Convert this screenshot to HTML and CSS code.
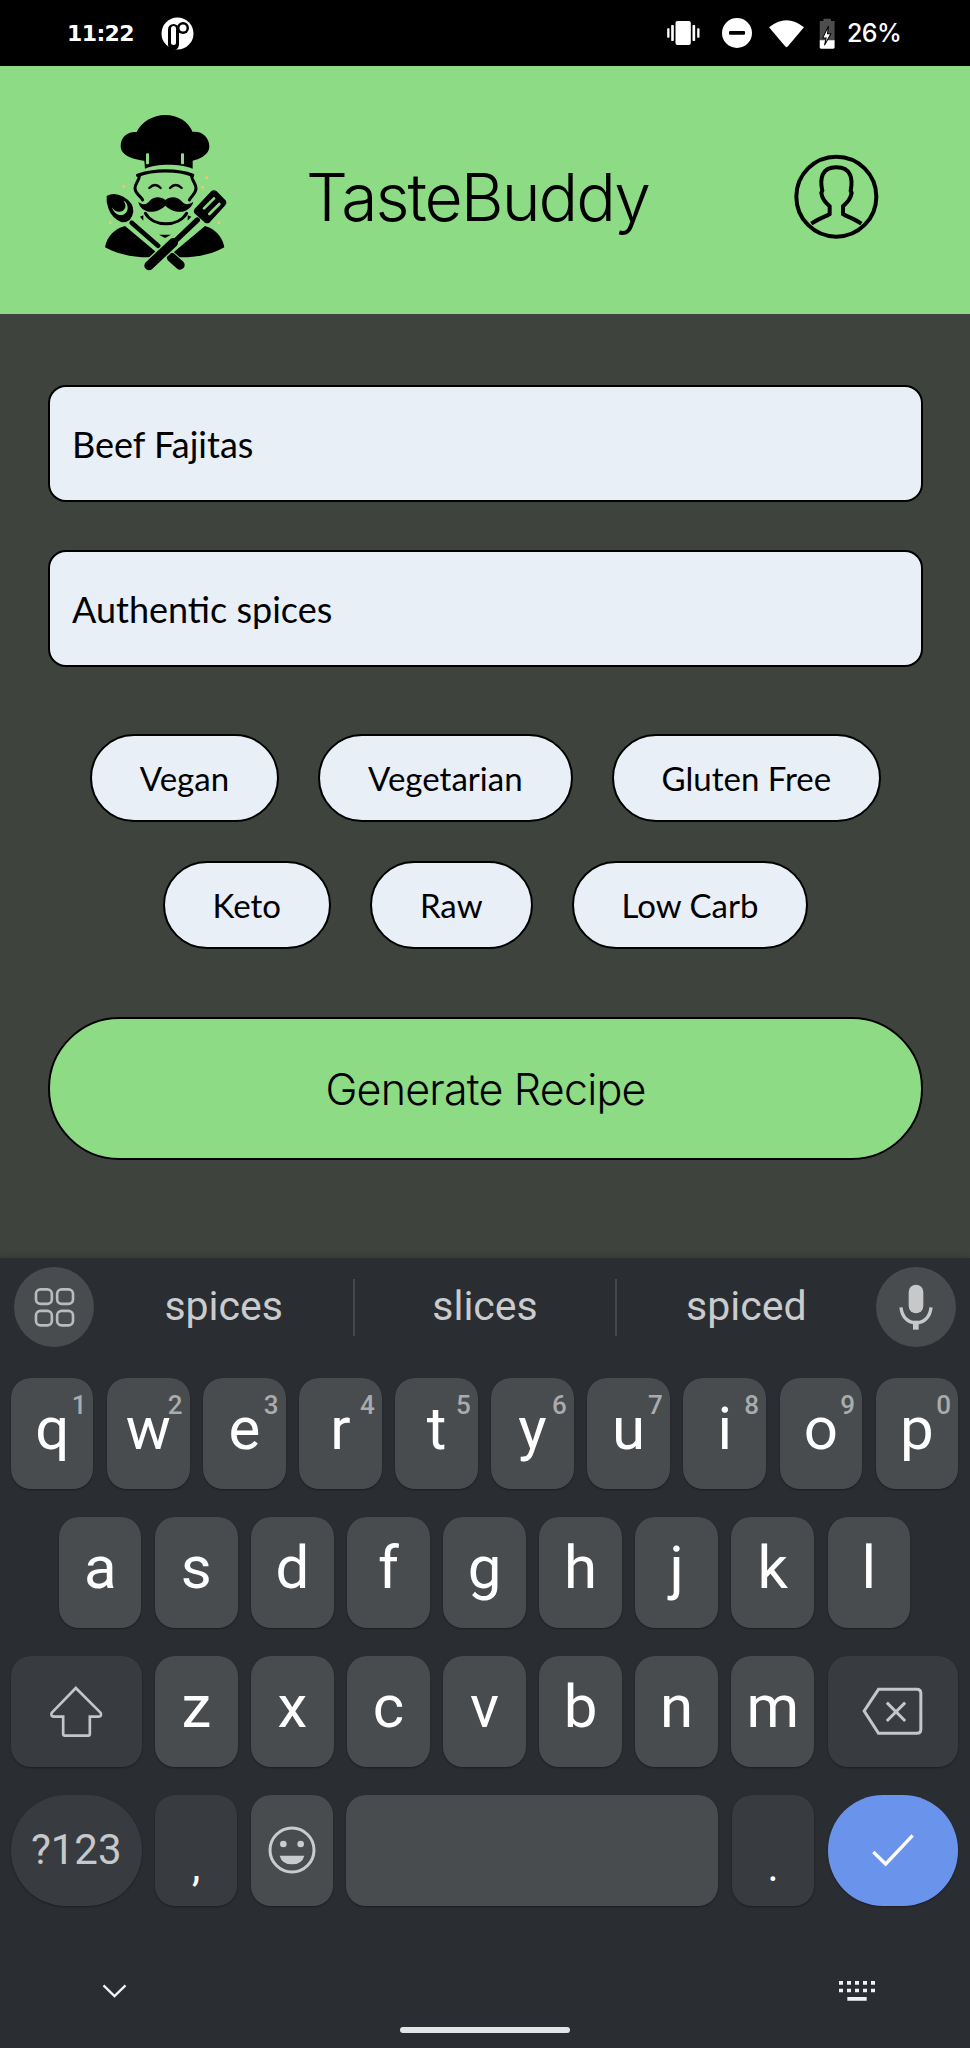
FILE: index.html
```html
<!DOCTYPE html>
<html lang="en">
<head>
<meta charset="utf-8">
<title>TasteBuddy</title>
<link rel="stylesheet" href="styles.css">
</head>
<body>
<div class="screen">
  <div class="status">
    <span class="time">11:22</span>
    <svg class="st-app" viewBox="0 0 33 33"><circle cx="16.5" cy="16.5" r="16" fill="#fff"/><rect x="7" y="7" width="11" height="26" rx="5.5" fill="#000"/><rect x="10" y="9" width="5" height="19" rx="2.5" fill="#fff"/><circle cx="22" cy="11" r="6" fill="#000"/><circle cx="22" cy="11" r="3.5" fill="#fff"/></svg>
    <span class="st-spacer"></span>
    <svg class="st-vib" viewBox="545 66 98 72"><rect x="570" y="66" width="46" height="72" rx="6" fill="#fff"/><rect x="557" y="78" width="8" height="48" rx="2" fill="#fff"/><rect x="545" y="88" width="7" height="28" rx="2" fill="#fff"/><rect x="621" y="78" width="8" height="48" rx="2" fill="#fff"/><rect x="635" y="88" width="7" height="28" rx="2" fill="#fff"/></svg>
    <svg class="st-dnd" viewBox="710 58 90 90"><circle cx="755" cy="103" r="45" fill="#fff"/><rect x="731" y="97" width="48" height="11" rx="3" fill="#000"/></svg>
    <svg class="st-wifi" viewBox="850 60 106 88"><path d="M850 85Q903 42 956 85L908 142Q903 149 898 142Z" fill="#fff"/></svg>
    <svg class="st-bat" viewBox="1002 56 50 92"><path d="M1015 58H1037V65H1048V125H1004V65H1015Z" fill="#4d4d4d"/><path d="M1004 122H1048V143Q1048 147 1044 147H1008Q1004 147 1004 143Z" fill="#fff"/><path d="M1030 80L1013 115H1023L1018 137L1037 103H1027Z" fill="#fff" stroke="#000" stroke-width="3"/></svg>
    <span class="batt">26%</span>
  </div>

  <header class="head">
    <svg class="chef" viewBox="0 6 480 570">
      <path d="M165 206L163 182C125 178 92 165 92 138C92 110 115 93 140 96C155 65 190 45 225 45C265 45 295 65 308 96C335 92 358 112 358 140C358 165 325 178 308 182L308 206C270 190 200 190 165 206Z" fill="#000"/>
      <rect x="168" y="160" width="9" height="33" rx="3" fill="#8edb85"/>
      <rect x="273" y="160" width="9" height="33" rx="3" fill="#8edb85"/>
      <path d="M143 226C190 208 265 208 308 226" class="cf-line" stroke-width="10"/>
      <path d="M148 226C150 238 135 250 135 265C135 282 150 285 158 300M305 226C303 238 318 250 318 265C318 282 305 285 298 300" class="cf-line" stroke-width="9"/>
      <path d="M178 264Q195 246 212 264M240 264Q257 246 275 264" class="cf-line" stroke-width="7"/>
      <path d="M226 300C212 288 190 288 178 304C168 316 155 314 145 305C148 326 170 338 190 335C205 333 218 325 226 317C234 325 247 333 262 335C285 338 305 325 310 305C298 314 285 316 275 304C262 288 240 288 226 300Z" fill="#000"/>
      <path d="M166 340C190 382 265 382 290 340" class="cf-line" stroke-width="9"/>
      <path d="M150 350L160 346V362Z M304 350L293 346V362Z M207 404H243L225 414Z" fill="#000"/>
      <path d="M45 442C50 410 75 385 105 378L215 470C160 476 95 470 45 442Z" fill="#000"/>
      <path d="M403 442C398 410 373 385 345 378L235 470C290 476 355 470 403 442Z" fill="#000"/>
      <path d="M125 368L270 495" class="cf-gap" stroke-width="34"/>
      <path d="M125 368L205 438" class="cf-line" stroke-width="14" stroke-linecap="butt"/>
      <path d="M244 472L270 495" class="cf-line" stroke-width="28"/>
      <path d="M177 497L322 360" class="cf-gap" stroke-width="36"/>
      <path d="M177 497L250 428" class="cf-line" stroke-width="28"/>
      <path d="M245 433L322 360" class="cf-line" stroke-width="16"/>
      <path d="M365 272Q374 268 380 274L408 302Q412 310 406 316L358 368Q352 372 345 368L316 342Q308 336 314 326Z" fill="#000"/>
      <path d="M342 325L372 295M358 342L388 312" class="cf-slot" stroke-width="8"/>
      <path d="M50 288Q72 275 100 290Q132 308 130 335Q125 368 95 367Q65 355 55 325Q48 305 50 288Z" fill="#000"/>
      <path d="M100 302C120 310 118 348 88 345C75 342 68 330 66 322C76 340 100 340 106 322C108 314 104 308 100 302Z" fill="#8edb85"/>
      <circle cx="101" cy="260" r="4" class="cf-spark"/><circle cx="350" cy="233" r="4.500" class="cf-spark"/><circle cx="338" cy="262" r="4" class="cf-spark"/><circle cx="61" cy="368" r="4" class="cf-spark"/><circle cx="387" cy="368" r="4" class="cf-spark"/>
    </svg>
    <h1 class="title">TasteBuddy</h1>
    <svg class="avatar" viewBox="930 465 260 260">
      <circle cx="1060" cy="593" r="120" fill="none" stroke="#000" stroke-width="12"/>
      <path d="M985 674C1005 660 1030 652 1040 645L1040 622C1025 608 1018 600 1015 582L1018 575C1010 540 1015 505 1060 505C1105 505 1110 540 1103 575L1106 582C1102 600 1095 608 1080 622L1080 645C1090 652 1115 660 1135 674" fill="none" stroke="#000" stroke-width="12"/>
    </svg>
  </header>

  <main class="form">
    <div class="field">Beef Fajitas</div>
    <div class="field">Authentic spices</div>
    <div class="chips">
      <div class="chip-row">
        <span class="chip">Vegan</span>
        <span class="chip">Vegetarian</span>
        <span class="chip">Gluten Free</span>
      </div>
      <div class="chip-row">
        <span class="chip">Keto</span>
        <span class="chip">Raw</span>
        <span class="chip">Low Carb</span>
      </div>
    </div>
    <div class="generate">Generate Recipe</div>
  </main>

  <section class="kbd">
    <div class="suggest">
      <span class="round">
        <svg class="ic-grid" viewBox="100 140 124 124"><rect x="106" y="147" width="48" height="44" rx="14"/><rect x="170" y="147" width="48" height="44" rx="14"/><rect x="106" y="212" width="48" height="44" rx="14"/><rect x="170" y="212" width="48" height="44" rx="14"/></svg>
      </span>
      <span class="word">spices</span>
      <span class="sep"></span>
      <span class="word">slices</span>
      <span class="sep"></span>
      <span class="word">spiced</span>
      <span class="round">
        <svg class="ic-mic" viewBox="1240 130 105 138"><rect x="1272" y="132" width="44" height="86" rx="22" fill="#c6c8ca"/><path d="M1249 200C1254 262 1334 262 1339 200" fill="none" stroke="#c6c8ca" stroke-width="10"/><rect x="1285" y="240" width="17" height="27" fill="#c6c8ca"/></svg>
      </span>
    </div>
    <div class="keys">
      <div class="row">
        <span class="key">q<sup class="num">1</sup></span><span class="key">w<sup class="num">2</sup></span><span class="key">e<sup class="num">3</sup></span><span class="key">r<sup class="num">4</sup></span><span class="key">t<sup class="num">5</sup></span><span class="key">y<sup class="num">6</sup></span><span class="key">u<sup class="num">7</sup></span><span class="key">i<sup class="num">8</sup></span><span class="key">o<sup class="num">9</sup></span><span class="key">p<sup class="num">0</sup></span>
      </div>
      <div class="row row-inset">
        <span class="key">a</span><span class="key">s</span><span class="key">d</span><span class="key">f</span><span class="key">g</span><span class="key">h</span><span class="key">j</span><span class="key">k</span><span class="key">l</span>
      </div>
      <div class="row">
        <span class="key key-wide key-dark">
          <svg class="ic-shift" viewBox="145 130 170 165"><path d="M228 142L156 216Q150 228 165 228H190V280Q190 285 195 285H265Q270 285 270 280V228H295Q308 228 302 216Z"/></svg>
        </span>
        <span class="key">z</span><span class="key">x</span><span class="key">c</span><span class="key">v</span><span class="key">b</span><span class="key">n</span><span class="key">m</span>
        <span class="key key-wide key-dark">
          <svg class="ic-back" viewBox="1128 145 188 150"><path d="M1180 155H1295Q1307 155 1307 167V275Q1307 287 1295 287H1180L1137 220Z"/><path d="M1205 195L1260 250M1260 195L1205 250"/></svg>
        </span>
      </div>
      <div class="row">
        <span class="key key-wide key-dark key-pill sym">?123</span>
        <span class="key key-dark punct">,</span>
        <span class="key">
          <svg class="ic-emoji" viewBox="800 556 150 150"><circle cx="875" cy="631" r="66" fill="none" stroke="#c9cbcd" stroke-width="9"/><circle cx="849" cy="613" r="10" fill="#c9cbcd"/><circle cx="901" cy="613" r="10" fill="#c9cbcd"/><path d="M838 648H912Q905 674 875 674Q845 674 838 648Z" fill="#c9cbcd"/></svg>
        </span>
        <span class="key key-space"></span>
        <span class="key key-dark punct">.</span>
        <span class="key key-wide key-pill key-go">
          <svg class="ic-check" viewBox="1155 580 138 108"><path d="M1165 640L1202 676L1283 590"/></svg>
        </span>
      </div>
    </div>
    <div class="navrow">
      <svg class="ic-chev" viewBox="303 1032 74 48"><path d="M307 1039L340 1071L373 1039"/></svg>
      <svg class="ic-kb" viewBox="1062 1025 108 60"><path d="M1062 1025h12v11h-12zM1086 1025h12v11h-12zM1110 1025h12v11h-12zM1134 1025h12v11h-12zM1158 1025h12v11h-12zM1062 1048h12v11h-12zM1086 1048h12v11h-12zM1110 1048h12v11h-12zM1134 1048h12v11h-12zM1158 1048h12v11h-12zM1087 1073h58v11h-58z"/></svg>
    </div>
    <div class="homebar"></div>
  </section>
</div>
</body>
</html>
```

FILE: styles.css
```css
* { box-sizing: border-box; }
html, body { margin: 0; padding: 0; background: #2a2d32; }
.screen { width: 970px; height: 2048px; display: flex; flex-direction: column; overflow: hidden; }

.status { height: 66px; background: #000; color: #fff; display: flex; align-items: center; padding: 0 67px; flex: none; }
.time { font: 700 22px "DejaVu Sans", sans-serif; width: 94px; letter-spacing: -.6px; }
.st-app { width: 33px; height: 33px; margin-left: 0; }
.st-spacer { flex: 1; }
.st-vib { width: 33px; height: 24px; }
.st-dnd { width: 30px; height: 30px; margin-left: 22px; }
.st-wifi { width: 35px; height: 29px; margin-left: 17px; }
.st-bat { width: 17px; height: 31px; margin-left: 15px; }
.batt { font: 500 25px Inter, sans-serif; margin-left: 11px; width: 56px; letter-spacing: -.6px; }

.head { height: 248px; background: #8edb85; display: flex; align-items: center; padding: 14px 90px 0 90px; flex: none; }
.chef { width: 160px; height: 190px; flex: none; }
.cf-line { fill: none; stroke: #000; stroke-linecap: round; }
.cf-gap { fill: none; stroke: #8edb85; stroke-linecap: round; }
.cf-slot { fill: none; stroke: #8edb85; stroke-linecap: round; }
.cf-spark { fill: #f4c66f; }
.title { margin: 0 auto 0 56px; font: 400 66px "Inter", sans-serif; font-weight: 300; color: #000; letter-spacing: -2px; }
.avatar { width: 86.67px; height: 86.67px; flex: none; }

.form { flex: 1; background: #3e433e; padding: 71px 47px 0 48px; display: flex; flex-direction: column; gap: 48px; }
.field { height: 117px; background: #e8eff6; border: 2px solid #000; border-radius: 18px; padding: 0 22px; display: flex; align-items: center; font: 400 36px Lato, sans-serif; color: #000; }
.chips { display: flex; flex-direction: column; gap: 39px; margin-top: 19px; }
.chip-row { display: flex; justify-content: center; gap: 39px; }
.chip { height: 88px; padding: 0 48px; background: #e8eff6; border: 2px solid #000; border-radius: 44px; display: flex; align-items: center; font: 400 33px Lato, sans-serif; color: #000; }
.generate { height: 143px; margin-top: 20px; background: #8edb85; border: 2px solid #000; border-radius: 72px; display: flex; align-items: center; justify-content: center; font: 300 43px Inter, sans-serif; color: #000; letter-spacing: -.8px; }

.kbd { height: 790px; flex: none; background: #2a2d32; padding: 9px 12px 0 11px; display: flex; flex-direction: column; box-shadow: 0 -2px 6px rgba(0,0,0,.15); }
.suggest { height: 80px; display: flex; align-items: center; padding: 0 2px 0 3px; }
.round { width: 80px; height: 80px; border-radius: 50%; background: #484c4f; display: flex; align-items: center; justify-content: center; flex: none; }
.ic-grid { width: 41px; height: 41px; fill: none; stroke: #b9bbbd; stroke-width: 8; }
.ic-mic { width: 35px; height: 46px; }
.word { flex: 1; text-align: center; font: 400 41px Roboto, sans-serif; color: #c9cbcd; padding-bottom: 2px; }
.sep { width: 2px; height: 57px; background: #44484c; flex: none; }

.keys { display: flex; flex-direction: column; gap: 28.500px; margin-top: 31px; }
.row { height: 110.500px; display: flex; gap: 13.600px; }
.row-inset { padding: 0 48px; }
.key { flex: 1 1 0; min-width: 0; position: relative; display: flex; justify-content: center; align-items: center; background: #484c4f; border-radius: 20px; box-shadow: 0 1px 2px rgba(0,0,0,.35); color: #fff; font: 400 60px/1 Roboto, sans-serif; padding-bottom: 8px; }
.key-wide { flex: 0 0 130.500px; }
.key-dark { background: #383b3f; }
.key-pill { border-radius: 55px; }
.key-space { flex: 0 0 372px; }
.key-go { background: #6a93ec; padding-bottom: 0; }
.num { position: absolute; top: 14px; right: 7px; font: 500 26px/1 Roboto, sans-serif; color: #a9abad; }
.sym { font-size: 42px; color: #c6c8ca; padding-bottom: 0; }
.punct { font-size: 42px; padding-bottom: 0; padding-top: 34px; }
.ic-shift { width: 57px; height: 55px; fill: none; stroke: #c4c6c8; stroke-width: 8; margin-top: 8px; }
.ic-back { width: 63px; height: 50px; fill: none; stroke: #c4c6c8; stroke-width: 9; margin-top: 8px; }
.ic-emoji { width: 50px; height: 50px; margin-top: 8px; }
.ic-check { width: 46px; height: 36px; fill: none; stroke: #fff; stroke-width: 10; }

.navrow { display: flex; justify-content: space-between; align-items: center; padding: 0 83px 0 91px; margin-top: 75px; height: 20px; }
.ic-chev { width: 25px; height: 16px; fill: none; stroke: #f2f2f2; stroke-width: 7; }
.ic-kb { width: 36px; height: 20px; fill: #f2f2f2; }
.homebar { width: 170px; height: 6px; border-radius: 3px; background: #e3e4e5; margin: 26px 0 0 389px; }
```
